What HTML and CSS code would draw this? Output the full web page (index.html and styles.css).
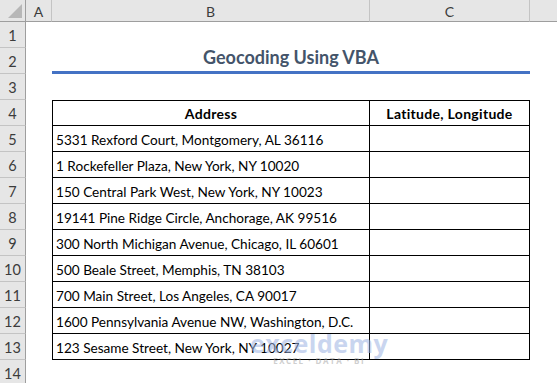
FILE: index.html
```html
<!DOCTYPE html>
<html>

<head>
    <title>Geocoding Using VBA</title>
    <link rel="stylesheet" href="styles.css">
</head>

<body>
    <div class="sheet">
        <!-- column headers -->
        <div class="corner"><span class="corner-mark"></span></div>
        <div class="col-head">A</div>
        <div class="col-head">B</div>
        <div class="col-head">C</div>
        <div class="col-head col-rest"></div>

        <!-- row 1 -->
        <div class="row-head">1</div>
        <div class="cell"></div><div class="cell"></div><div class="cell"></div><div class="cell"></div>

        <!-- row 2 -->
        <div class="row-head">2</div>
        <div class="cell"></div>
        <div class="cell title">Geocoding Using VBA</div>
        <div class="cell"></div>

        <!-- row 3 -->
        <div class="row-head">3</div>
        <div class="cell"></div><div class="cell"></div><div class="cell"></div><div class="cell"></div>

        <!-- row 4 -->
        <div class="row-head">4</div>
        <div class="cell"></div>
        <div class="cell tb tb-first tb-top th">Address</div>
        <div class="cell tb tb-top th">Latitude, Longitude</div>
        <div class="cell"></div>

        <div class="row-head">5</div>
        <div class="cell"></div>
        <div class="cell tb tb-first">5331 Rexford Court, Montgomery, AL 36116</div>
        <div class="cell tb"></div>
        <div class="cell"></div>

        <div class="row-head">6</div>
        <div class="cell"></div>
        <div class="cell tb tb-first">1 Rockefeller Plaza, New York, NY 10020</div>
        <div class="cell tb"></div>
        <div class="cell"></div>

        <div class="row-head">7</div>
        <div class="cell"></div>
        <div class="cell tb tb-first">150 Central Park West, New York, NY 10023</div>
        <div class="cell tb"></div>
        <div class="cell"></div>

        <div class="row-head">8</div>
        <div class="cell"></div>
        <div class="cell tb tb-first">19141 Pine Ridge Circle, Anchorage, AK 99516</div>
        <div class="cell tb"></div>
        <div class="cell"></div>

        <div class="row-head">9</div>
        <div class="cell"></div>
        <div class="cell tb tb-first">300 North Michigan Avenue, Chicago, IL 60601</div>
        <div class="cell tb"></div>
        <div class="cell"></div>

        <div class="row-head">10</div>
        <div class="cell"></div>
        <div class="cell tb tb-first">500 Beale Street, Memphis, TN 38103</div>
        <div class="cell tb"></div>
        <div class="cell"></div>

        <div class="row-head">11</div>
        <div class="cell"></div>
        <div class="cell tb tb-first">700 Main Street, Los Angeles, CA 90017</div>
        <div class="cell tb"></div>
        <div class="cell"></div>

        <div class="row-head">12</div>
        <div class="cell"></div>
        <div class="cell tb tb-first">1600 Pennsylvania Avenue NW, Washington, D.C.</div>
        <div class="cell tb"></div>
        <div class="cell"></div>

        <div class="row-head">13</div>
        <div class="cell"></div>
        <div class="cell tb tb-first">123 Sesame Street, New York, NY 10027</div>
        <div class="cell tb"></div>
        <div class="cell"></div>

        <div class="row-head">14</div>
        <div class="cell"></div><div class="cell"></div><div class="cell"></div><div class="cell"></div>

        <!-- watermark over the last rows -->
        <div class="watermark">
            <span class="wm-name">exceldemy</span>
            <span class="wm-tag">EXCEL · DATA · BI</span>
        </div>
    </div>
</body>

</html>
```

FILE: styles.css
```css
:root {
    --head-bg: #e6e6e6;
    --head-line: #c4c4c4;
    --head-edge: #9e9e9e;
    --head-text: #3c3c3c;
    --title-color: #44546a;
    --accent: #4472c4;
}

body {
    margin: 0;
    background: #ffffff;
    font-family: Lato, "Liberation Sans", sans-serif;
    overflow: hidden;
}

.sheet {
    position: relative;
    display: grid;
    grid-template-columns: 26px 26px 318px 160px 1fr;
    grid-template-rows: 22px repeat(14, 26px);
    width: 557px;
    height: 383px;
}

.corner,
.col-head {
    background: var(--head-bg);
    border-right: 1px solid var(--head-line);
    border-bottom: 1px solid var(--head-edge);
    box-sizing: border-box;
    color: var(--head-text);
    font-size: 14px;
    display: flex;
    align-items: center;
    justify-content: center;
    padding-top: 2px;
}

.col-rest {
    border-right: none;
}

.corner {
    position: relative;
    border-right-color: var(--head-edge);
}

.corner-mark {
    position: absolute;
    right: 3px;
    bottom: 3px;
    width: 0;
    height: 0;
    border-left: 14px solid transparent;
    border-bottom: 14px solid #b7b7b7;
}

.row-head {
    grid-column: 1;
    background: var(--head-bg);
    border-right: 1px solid var(--head-edge);
    border-bottom: 1px solid var(--head-line);
    box-sizing: border-box;
    color: var(--head-text);
    font-size: 14.5px;
    display: flex;
    align-items: flex-end;
    justify-content: center;
    padding-bottom: 3px;
}

.cell {
    box-sizing: border-box;
    font-size: 13.6px;
    color: #000000;
    display: flex;
    align-items: flex-end;
    padding: 0 3px 3px;
    white-space: nowrap;
}

.title {
    grid-column: 3 / 5;
    justify-content: center;
    font-size: 18px;
    font-weight: bold;
    color: var(--title-color);
    border-bottom: 3px solid var(--accent);
    padding-bottom: 3px;
}

.tb {
    border-right: 1px solid #000000;
    border-bottom: 1px solid #000000;
}

.tb-first {
    border-left: 1px solid #000000;
}

.tb-top {
    border-top: 1px solid #000000;
}

.th {
    justify-content: center;
    font-weight: bold;
    font-size: 14px;
    letter-spacing: 0.3px;
}

.watermark {
    position: absolute;
    left: 250px;
    top: 331px;
    display: flex;
    flex-direction: column;
    align-items: center;
    opacity: 0.55;
    pointer-events: none;
}

.wm-name {
    font-family: "Open Sans", sans-serif;
    font-weight: bold;
    font-size: 25px;
    line-height: 25px;
    color: #9db4e3;
    letter-spacing: 0.5px;
}

.wm-tag {
    font-family: "Open Sans", sans-serif;
    font-size: 8px;
    line-height: 9px;
    font-weight: bold;
    letter-spacing: 1.5px;
    color: #a8a8a8;
}
```
